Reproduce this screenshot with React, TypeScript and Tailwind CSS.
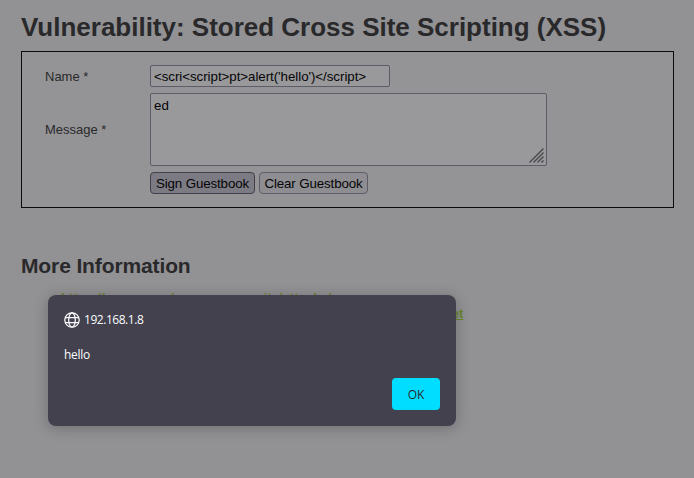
import React from 'react';

function ResizeGrip() {
  return (
    <svg className="absolute right-[2px] bottom-[2px]" width="15" height="15" viewBox="0 0 15 15" fill="none" stroke="#48484b" strokeWidth="1.4">
      <path d="M.5 14.5 14.5 .5M4.5 14.5l10-10M8.5 14.5l6-6M12.5 14.5l2-2" />
    </svg>
  );
}

function GlobeIcon() {
  return (
    <svg width="16" height="16" viewBox="0 0 16 16" fill="none" stroke="#fbfbfe" strokeWidth="1.25">
      <circle cx="8" cy="8" r="7.2" />
      <ellipse cx="8" cy="8" rx="3.3" ry="7.2" />
      <path d="M1.4 5.5h13.2M1.4 10.5h13.2" />
    </svg>
  );
}

function Guestbook() {
  return (
    <form className="mt-[8px] h-[157px] w-[653px] border border-[#0b0b0c] bg-[#949496] pt-[13px] pl-[23px] text-[13px] text-[#29292b]">
      <div className="flex h-[22px] items-center">
        <label className="w-[105px] pt-[2px]">Name *</label>
        <div className="flex h-[22px] w-[240px] items-center rounded-[2px] border border-[#5d5c68] bg-[#99999b] pt-px pl-[3px] text-[13.333px] tracking-[-0.05px] whitespace-nowrap text-[#050506]">
          {"<scri<script>pt>alert('hello')</script>"}
        </div>
      </div>
      <div className="mt-[6px] flex h-[73px] items-center">
        <label className="w-[105px]">Message *</label>
        <div className="relative h-[73px] w-[397px] rounded-[2px] border border-[#5d5c68] bg-[#99999b] pt-[4px] pl-[3px] text-[13.333px] leading-[15px] text-[#050506]">
          ed
          <ResizeGrip />
        </div>
      </div>
      <div className="mt-[6px] ml-[105px] flex gap-[4px] text-[13.333px] tracking-[-0.13px] text-[#050506]">
        <button type="button" className="h-[22px] w-[105px] rounded-[4px] border border-[#403f4a] bg-[#7c7b84] pt-px whitespace-nowrap">Sign Guestbook</button>
        <button type="button" className="h-[22px] w-[109px] rounded-[4px] border border-[#5d5c68] bg-[#8e8e92] pt-px whitespace-nowrap">Clear Guestbook</button>
      </div>
    </form>
  );
}

function AlertDialog() {
  return (
    <div className="absolute top-[295px] left-[48px] flex h-[131px] w-[408px] flex-col rounded-[8px] bg-[#42414d] px-4 pt-[16px] pb-4 font-['Open_Sans',sans-serif] text-[12px] text-[#fbfbfe] shadow-[0_2px_14px_rgba(30,30,35,0.3)]">
      <div className="flex h-[17px] items-center gap-[4px]">
        <GlobeIcon />
        <span className="text-[12px] font-medium tracking-[-0.46px]">192.168.1.8</span>
      </div>
      <p className="mt-[19px] h-4 leading-4 font-medium tracking-[-0.3px]">hello</p>
      <button type="button" className="mt-auto h-8 w-12 self-end rounded-[4px] bg-[#00ddff] pt-px font-medium text-[#2b2a33]">OK</button>
    </div>
  );
}

export default function App() {
  return (
    <div className="relative h-[478px] w-[694px] overflow-hidden bg-[#929294] pt-[11px] pl-[21px] font-['Liberation_Sans',Arial,sans-serif]">
      <h1 className="h-[32px] text-[26px] leading-[32px] font-bold tracking-[-0.01px] whitespace-nowrap text-[#29292b]">
        Vulnerability: Stored Cross Site Scripting (XSS)
      </h1>
      <Guestbook />
      <h2 className="mt-[44px] h-[28px] text-[21px] leading-[28px] font-bold tracking-[-0.12px] whitespace-nowrap text-[#29292b]">More Information</h2>
      <ul className="mt-[10px] ml-[40px] text-[13px] leading-[16px] font-bold tracking-[0.06px] whitespace-nowrap text-[#68862a] underline">
        <li>https://owasp.org/www-community/attacks/xss</li>
        <li>https://owasp.org/www-community/xss-filter-evasion-cheatsheet</li>
      </ul>
      <AlertDialog />
    </div>
  );
}
